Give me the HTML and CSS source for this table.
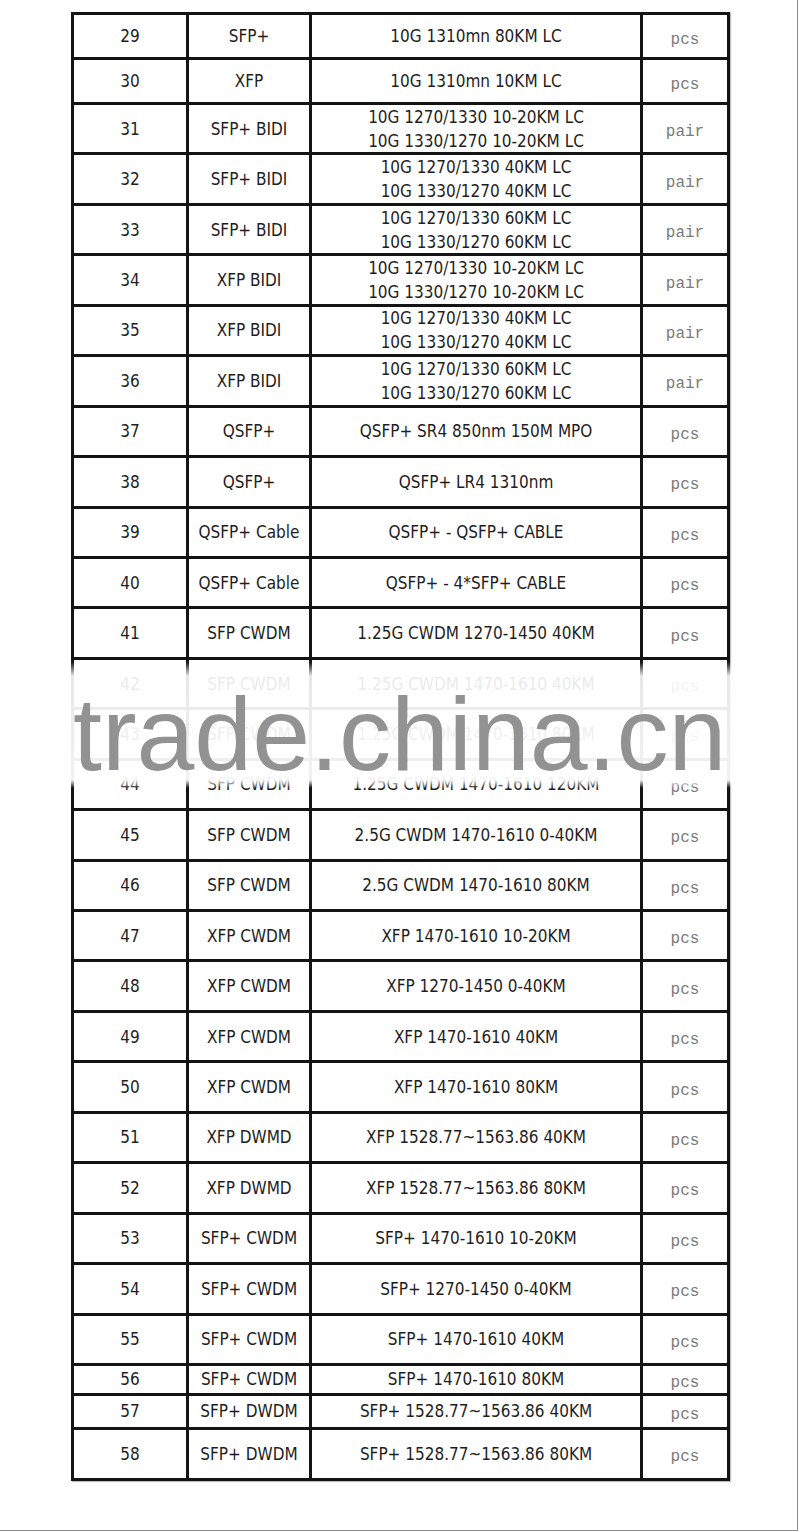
FILE: index.html
```html
<!DOCTYPE html>
<html>
<head>
<meta charset="utf-8">
<link rel="stylesheet" href="styles.css">
</head>
<body>
<div class="page">
  <div class="sheet">
    <div class="row h42"><div class="cell">29</div><div class="cell">SFP+</div><div class="cell">10G 1310mn 80KM LC</div><div class="cell unit">pcs</div></div>
    <div class="row h42"><div class="cell">30</div><div class="cell">XFP</div><div class="cell">10G 1310mn 10KM LC</div><div class="cell unit">pcs</div></div>
    <div class="row"><div class="cell">31</div><div class="cell">SFP+ BIDI</div><div class="cell">10G 1270/1330 10-20KM LC<br>10G 1330/1270 10-20KM LC</div><div class="cell unit">pair</div></div>
    <div class="row"><div class="cell">32</div><div class="cell">SFP+ BIDI</div><div class="cell">10G 1270/1330 40KM LC<br>10G 1330/1270 40KM LC</div><div class="cell unit">pair</div></div>
    <div class="row"><div class="cell">33</div><div class="cell">SFP+ BIDI</div><div class="cell">10G 1270/1330 60KM LC<br>10G 1330/1270 60KM LC</div><div class="cell unit">pair</div></div>
    <div class="row"><div class="cell">34</div><div class="cell">XFP BIDI</div><div class="cell">10G 1270/1330 10-20KM LC<br>10G 1330/1270 10-20KM LC</div><div class="cell unit">pair</div></div>
    <div class="row"><div class="cell">35</div><div class="cell">XFP BIDI</div><div class="cell">10G 1270/1330 40KM LC<br>10G 1330/1270 40KM LC</div><div class="cell unit">pair</div></div>
    <div class="row"><div class="cell">36</div><div class="cell">XFP BIDI</div><div class="cell">10G 1270/1330 60KM LC<br>10G 1330/1270 60KM LC</div><div class="cell unit">pair</div></div>
    <div class="row"><div class="cell">37</div><div class="cell">QSFP+</div><div class="cell">QSFP+ SR4 850nm 150M MPO</div><div class="cell unit">pcs</div></div>
    <div class="row"><div class="cell">38</div><div class="cell">QSFP+</div><div class="cell">QSFP+ LR4 1310nm</div><div class="cell unit">pcs</div></div>
    <div class="row"><div class="cell">39</div><div class="cell">QSFP+ Cable</div><div class="cell">QSFP+ - QSFP+ CABLE</div><div class="cell unit">pcs</div></div>
    <div class="row"><div class="cell">40</div><div class="cell">QSFP+ Cable</div><div class="cell">QSFP+ - 4*SFP+ CABLE</div><div class="cell unit">pcs</div></div>
    <div class="row"><div class="cell">41</div><div class="cell">SFP CWDM</div><div class="cell">1.25G CWDM 1270-1450 40KM</div><div class="cell unit">pcs</div></div>
    <div class="row"><div class="cell">42</div><div class="cell">SFP CWDM</div><div class="cell">1.25G CWDM 1470-1610 40KM</div><div class="cell unit">pcs</div></div>
    <div class="row"><div class="cell">43</div><div class="cell">SFP CWDM</div><div class="cell">1.25G CWDM 1470-1610 80KM</div><div class="cell unit">pcs</div></div>
    <div class="row"><div class="cell">44</div><div class="cell">SFP CWDM</div><div class="cell">1.25G CWDM 1470-1610 120KM</div><div class="cell unit">pcs</div></div>
    <div class="row"><div class="cell">45</div><div class="cell">SFP CWDM</div><div class="cell">2.5G CWDM 1470-1610 0-40KM</div><div class="cell unit">pcs</div></div>
    <div class="row"><div class="cell">46</div><div class="cell">SFP CWDM</div><div class="cell">2.5G CWDM 1470-1610 80KM</div><div class="cell unit">pcs</div></div>
    <div class="row"><div class="cell">47</div><div class="cell">XFP CWDM</div><div class="cell">XFP 1470-1610 10-20KM</div><div class="cell unit">pcs</div></div>
    <div class="row"><div class="cell">48</div><div class="cell">XFP CWDM</div><div class="cell">XFP 1270-1450 0-40KM</div><div class="cell unit">pcs</div></div>
    <div class="row"><div class="cell">49</div><div class="cell">XFP CWDM</div><div class="cell">XFP 1470-1610 40KM</div><div class="cell unit">pcs</div></div>
    <div class="row"><div class="cell">50</div><div class="cell">XFP CWDM</div><div class="cell">XFP 1470-1610 80KM</div><div class="cell unit">pcs</div></div>
    <div class="row"><div class="cell">51</div><div class="cell">XFP DWMD</div><div class="cell">XFP 1528.77~1563.86 40KM</div><div class="cell unit">pcs</div></div>
    <div class="row"><div class="cell">52</div><div class="cell">XFP DWMD</div><div class="cell">XFP 1528.77~1563.86 80KM</div><div class="cell unit">pcs</div></div>
    <div class="row"><div class="cell">53</div><div class="cell">SFP+ CWDM</div><div class="cell">SFP+ 1470-1610 10-20KM</div><div class="cell unit">pcs</div></div>
    <div class="row"><div class="cell">54</div><div class="cell">SFP+ CWDM</div><div class="cell">SFP+ 1270-1450 0-40KM</div><div class="cell unit">pcs</div></div>
    <div class="row"><div class="cell">55</div><div class="cell">SFP+ CWDM</div><div class="cell">SFP+ 1470-1610 40KM</div><div class="cell unit">pcs</div></div>
    <div class="row h27"><div class="cell">56</div><div class="cell">SFP+ CWDM</div><div class="cell">SFP+ 1470-1610 80KM</div><div class="cell unit">pcs</div></div>
    <div class="row h31"><div class="cell">57</div><div class="cell">SFP+ DWDM</div><div class="cell">SFP+ 1528.77~1563.86 40KM</div><div class="cell unit">pcs</div></div>
    <div class="row h48"><div class="cell">58</div><div class="cell">SFP+ DWDM</div><div class="cell">SFP+ 1528.77~1563.86 80KM</div><div class="cell unit">pcs</div></div>
  </div>
  <div class="fog"><div class="mark">trade.china.cn</div></div>
</div>
</body>
</html>
```
FILE: styles.css
```css
html, body {
  margin: 0;
  padding: 0;
  background: #fff;
}

.page {
  position: relative;
  box-sizing: border-box;
  width: 798px;
  height: 1531px;
  padding: 12px 0 0 71px;
  border-right: 1px solid #8c8c8c;
  border-bottom: 1px solid #8c8c8c;
  overflow: hidden;
}

.sheet {
  box-sizing: border-box;
  width: 659px;
  display: flex;
  flex-direction: column;
  gap: 3px;
  padding: 3px;
  background: #141414;
  box-shadow: 1px 1px 1px rgba(0, 0, 0, 0.25);
}

.row {
  display: grid;
  grid-template-columns: 112px 120px 328px 84px;
  grid-template-rows: 100%;
  column-gap: 3px;
  height: 47.44px;
}

.row.h42 { height: 42px; }
.row.h27 { height: 27px; }
.row.h31 { height: 31px; }
.row.h48 { height: 48px; }

.cell {
  min-height: 0;
  overflow: visible;
  background: #fff;
  display: flex;
  align-items: center;
  justify-content: center;
  text-align: center;
  font-family: "DejaVu Sans Condensed", "DejaVu Sans", sans-serif;
  font-stretch: condensed;
  font-size: 17px;
  line-height: 24px;
  color: #1e1e1e;
}

.cell.unit {
  box-sizing: border-box;
  font-family: "Liberation Mono", monospace;
  font-stretch: normal;
  font-size: 16px;
  line-height: 16px;
  color: #7a7a7a;
  padding-top: 7px;
}

.fog {
  position: absolute;
  left: 0;
  top: 662px;
  width: 798px;
  height: 126px;
  background: linear-gradient(to bottom,
    rgba(255, 255, 255, 0) 0,
    rgba(255, 255, 255, 0.9) 14px,
    rgba(255, 255, 255, 0.94) 118px,
    rgba(255, 255, 255, 0) 126px);
}

.mark {
  position: absolute;
  left: 73px;
  top: 34px;
  font-family: "Liberation Sans", Arial, sans-serif;
  font-size: 104px;
  line-height: 76px;
  color: #929292;
  white-space: nowrap;
}
```
